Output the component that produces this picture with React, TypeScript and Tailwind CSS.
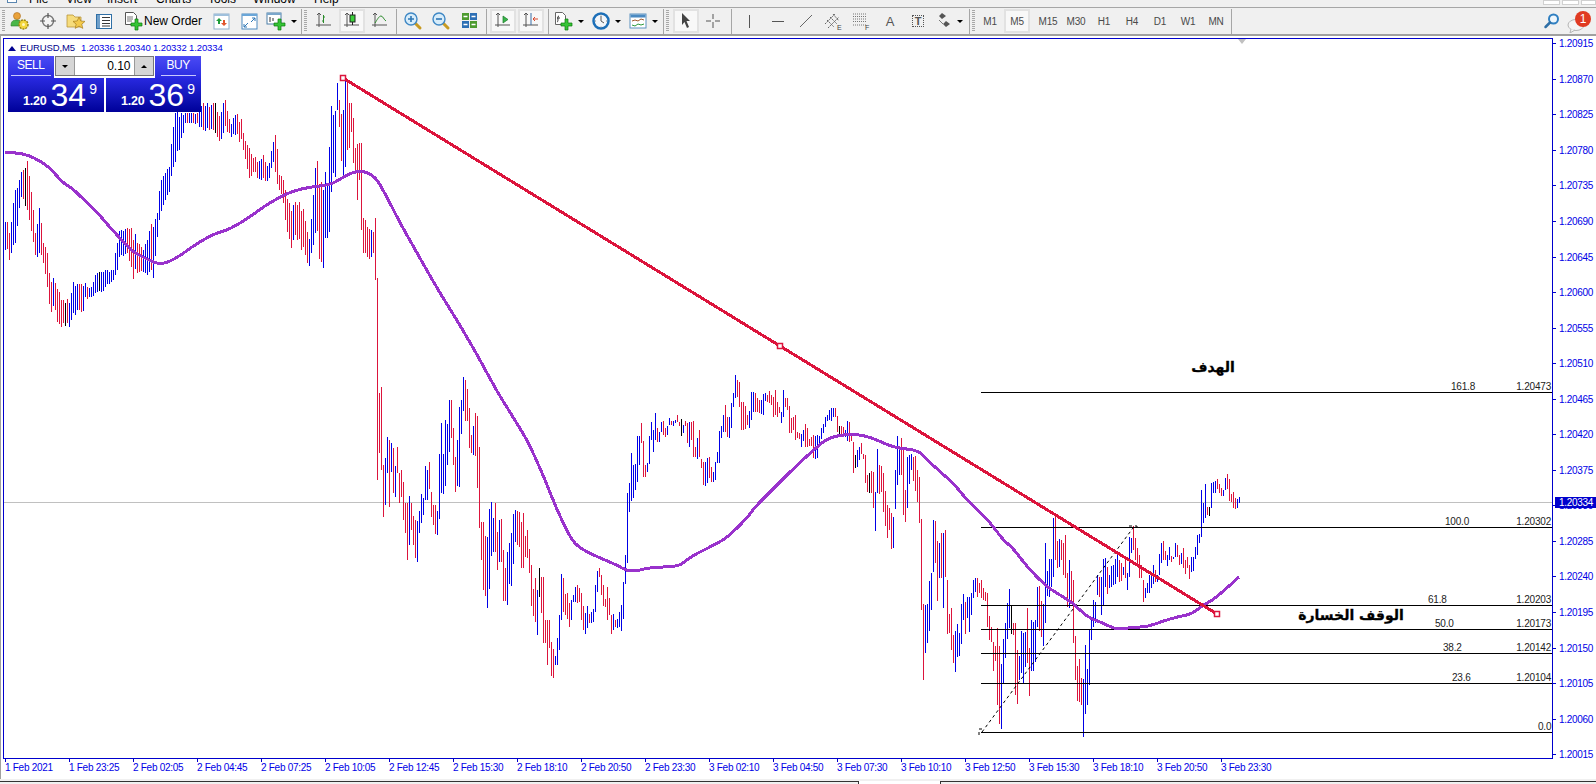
import type { ReactNode } from "react";

type Row = [number, number, number];

// first stretch of the chart, read straight in page pixels
const earlyBars: Row[] = [
  [5, 222, 250], [10, 232, 258], [15, 190, 243], [18, 183, 213], [22, 170, 193], [27, 161, 210], [32, 197, 233],
  [35, 233, 255], [39, 208, 253], [43, 243, 263], [47, 253, 287], [50, 280, 310], [55, 283, 310], [58, 290, 325],
  [63, 300, 323], [69, 303, 327], [73, 282, 313], [78, 283, 308], [82, 283, 313], [85, 283, 297], [90, 290, 298],
  [95, 275, 293], [102, 273, 293], [107, 270, 284], [113, 270, 280], [116, 243, 270], [120, 232, 257], [127, 228, 253],
  [132, 233, 275], [137, 243, 273], [143, 250, 272], [148, 232, 270], [153, 227, 278], [157, 213, 237], [160, 183, 215],
  [165, 173, 200], [169, 167, 192], [172, 132, 167], [175, 113, 162], [185, 113, 123], [197, 113, 123], [203, 103, 130],
  [210, 107, 129], [215, 103, 133], [218, 117, 140], [223, 103, 133], [226, 103, 127], [230, 127, 138], [235, 115, 135],
  [242, 122, 142], [244, 142, 157], [249, 148, 178], [253, 158, 172], [258, 160, 177], [263, 155, 178], [268, 167, 180],
  [273, 142, 162], [276, 140, 185], [279, 175, 190], [282, 180, 200], [285, 190, 220], [290, 210, 248], [295, 202, 235],
  [302, 207, 247], [307, 232, 263], [310, 237, 263], [315, 168, 233], [322, 180, 263], [327, 183, 238], [330, 113, 213],
  [333, 115, 173], [336, 95, 165], [337, 83, 110], [339, 100, 127], [342, 120, 177], [345, 80, 167], [347, 83, 150],
  [349, 103, 148], [351, 103, 132], [353, 118, 163], [355, 148, 170], [357, 144, 200], [359, 143, 180], [361, 143, 230],
  [363, 218, 253], [367, 227, 257], [370, 233, 263], [373, 232, 253], [375, 218, 280],
];

// the rest is per bar: [x, top, bottom] measured on 3x crops
const midBars: Row[] = [
  [82, -246, 360], [88, 100, 280], [94, 80, 330], [100, 315, 470], [106, 295, 435], [112, 232, 340], [118, 240, 440], [124, 250, 335],
  [130, 265, 400], [136, 318, 410], [142, 260, 340], [148, 340, 430], [154, 330, 410], [160, 365, 480], [166, 430, 520], [172, 430, 600],
  [178, 408, 555], [184, 430, 510], [190, 468, 555], [196, 480, 595], [202, 483, 605], [208, 453, 520], [214, 402, 490], [220, 415, 465],
  [226, 318, 420], [232, 330, 420], [238, 306, 387], [244, 395, 470], [250, 435, 495], [256, 435, 522], [262, 453, 525], [268, 283, 476],
  [274, 190, 400], [280, 283, 403], [286, 180, 378], [292, 192, 315], [298, 120, 277], [304, 120, 235], [310, 205, 315], [316, 290, 395],
  [322, 240, 378], [328, 140, 382], [334, 120, 222], [340, 52, 153], [346, 60, 183], [352, 87, 183], [358, 143, 265], [364, 225, 280],
  [370, 198, 285], [376, 160, 287], [382, 167, 383], [388, 262, 503], [394, 487, 600], [400, 487, 690], [406, 528, 708], [412, 530, 743],
  [418, 447, 687], [424, 425, 587], [430, 473, 577], [436, 428, 577], [442, 517, 630], [448, 480, 607], [454, 477, 605], [460, 570, 722],
  [466, 625, 724], [472, 575, 735], [478, 550, 672], [484, 520, 678], [490, 462, 612], [496, 451, 545], [502, 452, 555], [508, 455, 562],
  [514, 487, 623], [520, 460, 625], [526, 527, 590], [532, 510, 595], [538, 567, 640], [544, 615, 738], [550, 687, 768], [556, 655, 785],
  [562, 690, 825], [568, 625, 710], [574, 652, 758], [580, 652, 850], [586, 780, 850], [592, 780, 915], [598, 780, 865], [604, 845, 948],
  [610, 867, 953], [616, 888, 915], [622, 835, 915], [628, 765, 870], [634, 643, 780], [640, 655, 755], [646, 702, 765], [652, 700, 778],
  [658, 730, 800], [664, 720, 780], [670, 705, 725], [676, 682, 725], [682, 675, 730], [688, 685, 725], [694, 700, 780], [700, 738, 810],
  [706, 760, 822], [712, 738, 805], [718, 762, 790], [724, 755, 790], [730, 747, 785], [736, 675, 755], [742, 632, 695], [748, 625, 650],
  [754, 645, 705], [760, 675, 738], [766, 717, 742], [772, 682, 780], [778, 713, 765], [784, 765, 822], [790, 762, 810], [796, 780, 800],
  [802, 778, 805], [808, 755, 800], [814, 735, 812], [820, 665, 777], [826, 585, 672], [832, 398, 608], [838, 370, 455], [844, 280, 423],
  [850, 315, 415], [856, 312, 390], [862, 228, 365], [868, 228, 315], [874, 190, 248], [880, 243, 350], [886, 315, 350], [892, 310, 335],
  [898, 228, 312], [904, 185, 240], [910, 210, 275], [916, 160, 240], [922, 203, 245], [928, 215, 245], [934, 187, 215], [940, 183, 225],
  [946, 205, 230], [952, 198, 225], [958, 175, 195], [964, 183, 195], [970, 183, 197], [976, 180, 190], [982, 165, 185], [988, 185, 197],
  [994, 178, 228], [1000, 195, 218], [1006, 183, 197], [1012, 190, 250], [1018, 185, 262],
];

const lateBars: Row[] = [
  [214, 185, 240], [220, 183, 290], [226, 262, 290], [232, 235, 297], [238, 210, 290], [244, 298, 325], [250, 305, 375], [256, 305, 378],
  [262, 295, 368], [268, 290, 355], [274, 320, 365], [280, 335, 365], [286, 305, 360], [292, 275, 310], [298, 213, 310], [304, 197, 235],
  [310, 165, 215], [316, 135, 215], [322, 170, 232], [328, 170, 235], [334, 130, 205], [340, 100, 140], [346, 45, 113], [352, 60, 110],
  [358, 67, 140], [364, 125, 210], [370, 127, 210], [376, 138, 207], [382, 165, 195], [388, 152, 205], [394, 95, 180], [400, 95, 155],
  [406, 100, 155], [412, 113, 155], [418, 120, 160], [424, 120, 163], [430, 103, 165], [436, 100, 122], [442, 105, 125], [448, 93, 130],
  [454, 105, 135], [460, 110, 172], [466, 90, 165], [472, 125, 172], [478, 140, 160], [484, 155, 190], [490, 90, 170], [496, 115, 140],
  [502, 115, 150], [508, 138, 220], [514, 175, 220], [520, 172, 210], [526, 165, 240], [532, 215, 235], [538, 218, 238], [544, 222, 262],
  [550, 210, 243], [556, 192, 262], [562, 203, 262], [568, 238, 258], [574, 230, 258], [580, 225, 295], [586, 228, 296], [592, 225, 293],
  [598, 228, 260], [604, 205, 237], [610, 193, 218], [616, 170, 200], [622, 165, 182], [628, 150, 180], [634, 145, 183], [640, 145, 172],
  [646, 145, 172], [652, 168, 215], [658, 198, 222], [664, 198, 225], [670, 200, 230], [676, 210, 232], [682, 183, 243], [688, 185, 245],
  [694, 220, 243], [700, 247, 340], [706, 285, 325], [712, 270, 322], [718, 262, 300], [724, 250, 283], [730, 283, 297], [736, 285, 368],
  [742, 345, 395], [748, 338, 400], [754, 333, 398], [760, 335, 443], [766, 397, 512], [772, 267, 398], [778, 315, 402], [784, 317, 395],
  [790, 340, 455], [796, 393, 497], [802, 435, 533], [808, 445, 510], [814, 460, 568], [820, 472, 565], [826, 330, 448], [832, 228, 375],
  [838, 263, 345], [844, 235, 345], [850, 265, 465], [856, 390, 485], [862, 290, 443], [868, 285, 373], [874, 283, 330], [880, 290, 362],
  [886, 288, 392], [892, 330, 425], [898, 350, 490], [904, 477, 750], [910, 733, 960], [916, 735, 880], [922, 732, 848], [928, 663, 813],
  [934, 640, 750], [940, 480, 635], [946, 483, 610], [952, 543, 722], [958, 550, 655], [964, 518, 655], [970, 520, 743], [976, 510, 652],
  [982, 660, 823], [988, 762, 820], [994, 745, 870], [1000, 825, 908], [1006, 812, 935], [1012, 793, 890], [1018, 820, 888], [1024, 732, 853],
  [1030, 702, 780], [1036, 725, 822], [1042, 712, 775], [1048, 712, 815], [1054, 685, 765], [1060, 660, 717], [1066, 655, 715], [1072, 655, 698],
  [1078, 670, 700],
];

const endBars: Row[] = [
  [3, 400, 465], [10, 360, 415], [16, 355, 395], [22, 355, 410], [28, 368, 400], [34, 360, 415], [40, 385, 420], [46, 395, 422], [52, 400, 500],
  [58, 468, 540], [64, 502, 545], [70, 545, 632], [76, 558, 602], [82, 505, 735], [88, 558, 792], [94, 612, 806], [100, 537, 670], [106, 490, 595],
  [112, 430, 538], [118, 388, 505], [124, 437, 522], [130, 490, 525], [136, 488, 705], [142, 570, 732], [148, 587, 660], [154, 513, 640], [160, 518, 668],
  [166, 515, 622], [172, 445, 608], [178, 565, 708], [184, 480, 632], [190, 485, 632], [196, 480, 605], [202, 380, 500], [208, 378, 512], [214, 422, 530],
  [220, 432, 558], [226, 248, 490], [232, 332, 408], [238, 297, 410], [244, 297, 380], [250, 175, 352], [256, 160, 300], [262, 242, 325], [268, 238, 322],
  [274, 240, 300], [280, 248, 345], [286, 225, 355], [292, 340, 440], [298, 300, 445], [304, 332, 425], [310, 360, 550], [316, 527, 660], [322, 617, 723],
  [328, 597, 727], [334, 655, 735], [340, 657, 830], [346, 555, 762], [352, 627, 735], [358, 507, 675], [364, 475, 540], [370, 420, 500], [376, 425, 490],
  [382, 345, 405], [388, 350, 410], [394, 350, 465], [400, 297, 435], [406, 295, 380], [412, 320, 403], [418, 345, 385], [424, 318, 380], [430, 315, 375],
  [436, 298, 372], [442, 280, 352], [448, 300, 365], [454, 310, 362], [460, 320, 345], [466, 300, 355], [472, 340, 390], [478, 232, 350], [484, 235, 278],
  [490, 197, 270], [496, 235, 300], [502, 265, 320], [508, 285, 355], [514, 315, 355], [520, 360, 425], [526, 385, 415], [532, 370, 400], [538, 345, 400],
  [544, 345, 385], [550, 315, 372], [556, 330, 365], [562, 345, 365], [568, 282, 345], [574, 248, 310], [580, 242, 300], [586, 272, 300], [592, 285, 318],
  [598, 260, 300], [604, 288, 305], [610, 290, 298], [616, 250, 290], [622, 255, 290], [628, 285, 315], [634, 280, 312], [640, 265, 325], [646, 300, 342],
  [652, 290, 325], [658, 315, 358], [664, 290, 335], [670, 290, 332], [676, 260, 298], [682, 225, 285], [688, 222, 248], [694, 90, 232], [700, 130, 188],
  [706, 72, 175], [712, 140, 165], [718, 140, 168], [724, 70, 145], [730, 65, 98], [736, 62, 100], [742, 58, 88], [748, 72, 100], [754, 83, 108],
  [760, 90, 108], [766, 55, 90], [772, 42, 88], [778, 58, 122], [784, 102, 125], [790, 97, 145], [796, 115, 148], [802, 118, 145], [808, 110, 130],
];

const fromCrop = (ox: number, oy: number, rows: Row[]): Row[] =>
  rows.map(([x, a, b]) => [Math.round(ox + x / 3), oy + a / 3, oy + b / 3]);

const allRows: Row[] = [
  ...earlyBars,
  ...fromCrop(350, 360, midBars),
  ...fromCrop(620, 360, lateBars),
  ...fromCrop(970, 460, endBars),
];

const blackBars = [25, 65, 99, 215, 539, 681, 839, 855, 869, 1011, 1209];

function buildBars() {
  const known = new Map<number, Row>();
  allRows.forEach((r) => known.set(r[0], r));
  const keys = [...known.keys()].sort((a, b) => a - b);
  let seed = 7;
  const rnd = () => {
    seed = (seed * 16807) % 2147483647;
    return seed / 2147483647;
  };
  const bars: { x: number; top: number; bottom: number }[] = [];
  for (let x = 5; x <= 1239; x += 2) {
    const hit = known.get(x);
    if (hit) {
      bars.push({ x, top: hit[1], bottom: hit[2] });
      continue;
    }
    const after = keys.findIndex((k) => k > x);
    const a = known.get(keys[Math.max(after - 1, 0)])!;
    const b = known.get(keys[Math.max(after, 0)])!;
    const t = (x - a[0]) / (b[0] - a[0]);
    const top = a[1] + (b[1] - a[1]) * t;
    const bottom = a[2] + (b[2] - a[2]) * t;
    const wobble = (rnd() - 0.5) * (bottom - top) * 0.3;
    bars.push({ x, top: top + wobble, bottom: bottom + wobble });
  }
  return bars;
}

const bars = buildBars();
const mid = (i: number) => {
  const b = bars[Math.min(Math.max(i, 0), bars.length - 1)];
  return (b.top + b.bottom) / 2;
};

let bluePath = "";
let redPath = "";
let blackPath = "";
bars.forEach((b, i) => {
  const seg = `M${b.x + 0.5} ${Math.round(b.top)}V${Math.round(b.bottom)}`;
  if (blackBars.includes(b.x)) blackPath += seg;
  else if (mid(i + 1) < mid(i - 1)) bluePath += seg;
  else redPath += seg;
});

const maPoints = [
  [5, 152], [17, 153], [28, 155], [40, 161], [50, 168], [63, 183], [72, 188], [80, 196], [97, 212], [107, 224], [117, 235], [133, 252],
  [143, 257], [155, 263], [163, 264], [177, 258], [193, 246], [210, 236], [220, 232], [230, 229], [250, 217], [263, 207], [280, 197],
  [293, 191], [310, 187], [330, 185], [340, 179], [353, 172], [363, 171], [375, 176], [387, 197], [400, 223], [420, 258], [438, 290],
  [460, 325], [480, 360], [487, 373], [498, 393], [513, 417], [527, 440], [535, 457], [543, 475], [553, 500], [563, 523], [573, 542],
  [583, 550], [600, 558], [617, 565], [627, 571], [637, 571], [647, 568], [663, 567], [680, 566], [690, 557], [710, 547], [727, 538],
  [748, 517], [755, 507], [767, 495], [795, 467], [817, 447], [828, 438], [847, 434], [863, 435], [877, 440], [895, 448], [918, 450],
  [927, 460], [953, 483], [963, 495], [970, 503], [990, 522], [1003, 540], [1013, 548], [1027, 567], [1047, 587], [1060, 595], [1073, 603],
  [1087, 617], [1103, 623], [1117, 630], [1133, 627], [1147, 627], [1163, 621], [1177, 617], [1192, 614], [1203, 605], [1213, 600],
  [1228, 587], [1239, 577],
];

// round the corners off through the midpoints
const maPath = maPoints.reduce((d, p, i) => {
  if (i === 0) return `M${p[0]} ${p[1]}`;
  if (i === maPoints.length - 1) return `${d}L${p[0]} ${p[1]}`;
  const n = maPoints[i + 1];
  return `${d}Q${p[0]} ${p[1]} ${(p[0] + n[0]) / 2} ${(p[1] + n[1]) / 2}`;
}, "");

const fibLevels = [
  { y: 392, name: "161.8", nameX: 1451, price: "1.20473", textY: 390 },
  { y: 527, name: "100.0", nameX: 1445, price: "1.20302", textY: 525 },
  { y: 605, name: "61.8", nameX: 1428, price: "1.20203", textY: 603 },
  { y: 629, name: "50.0", nameX: 1435, price: "1.20173", textY: 627 },
  { y: 653, name: "38.2", nameX: 1443, price: "1.20142", textY: 651 },
  { y: 683, name: "23.6", nameX: 1452, price: "1.20104", textY: 681 },
  { y: 732, name: "0.0", nameX: 1538, price: "", textY: 730 },
];

const priceLabels = Array.from({ length: 21 }, (_, i) => (1.20915 - i * 0.00045).toFixed(5));

const timeLabels = [
  "1 Feb 2021", "1 Feb 23:25", "2 Feb 02:05", "2 Feb 04:45", "2 Feb 07:25", "2 Feb 10:05", "2 Feb 12:45",
  "2 Feb 15:30", "2 Feb 18:10", "2 Feb 20:50", "2 Feb 23:30", "3 Feb 02:10", "3 Feb 04:50", "3 Feb 07:30",
  "3 Feb 10:10", "3 Feb 12:50", "3 Feb 15:30", "3 Feb 18:10", "3 Feb 20:50", "3 Feb 23:30",
];

function Grip({ className = "" }: { className?: string }) {
  return (
    <div
      className={`w-[3px] h-[22px] shrink-0 bg-[repeating-linear-gradient(to_bottom,#a8a8a8_0,#a8a8a8_1px,transparent_1px,transparent_2px)] ${className}`}
    />
  );
}

function Sep({ className = "" }: { className?: string }) {
  return <div className={`w-px h-[25px] shrink-0 bg-[#a6a6a6] ${className}`} />;
}

function Btn({ className = "w-[28px]", active, children }: { className?: string; active?: boolean; children: ReactNode }) {
  return (
    <div
      className={`h-[24px] shrink-0 flex items-center justify-center ${className} ${
        active ? "bg-[#f8f8f8] border-2 border-[#e2e2e2]" : ""
      }`}
    >
      {children}
    </div>
  );
}

function Drop() {
  return <div className="ml-[5px] w-0 h-0 border-x-[3px] border-x-transparent border-t-[3px] border-t-black" />;
}

function Plus({ x, y }: { x: number; y: number }) {
  return (
    <path
      transform={`translate(${x} ${y})`}
      d="M4 0h3v4h4v3H7v4H4V7H0V4h4z"
      fill="#35c435"
      stroke="#0c7a0c"
      strokeWidth="0.7"
    />
  );
}

function Ico({ w = 20, children }: { w?: number; children: ReactNode }) {
  return (
    <svg width={w} height="20" viewBox={`0 0 ${w} 20`} className="block shrink-0">
      {children}
    </svg>
  );
}

function Tf({ label, className = "w-[28px]", active }: { label: string; className?: string; active?: boolean }) {
  return (
    <Btn className={className} active={active}>
      <span className="text-[10px] tracking-[-0.2px] text-[#4a4a4a]">{label}</span>
    </Btn>
  );
}

function ChartAxes() {
  return <path d="M4 2v14M1 14h15M4 2l-2 2M4 2l2 2" fill="none" stroke="#555" strokeWidth="1" />;
}

function Toolbar() {
  return (
    <div className="h-[26px] bg-[#f0f0f0] flex items-center">
      <Grip className="ml-[2px]" />
      <Btn className="w-[28px] ml-px">
        <Ico w={20}>
          <circle cx="7" cy="5" r="3.5" fill="#e9a23b" stroke="#a76a1a" strokeWidth="0.6" />
          <path d="M1 15c0-5 2-6 6-6 3 0 5 1 5 6z" fill="#49b649" stroke="#2b7a2b" strokeWidth="0.6" />
          <circle cx="13.5" cy="13.5" r="4.5" fill="#f3d63c" stroke="#9a8412" strokeWidth="1.4" strokeDasharray="2 1" />
          <circle cx="13.5" cy="13.5" r="1.5" fill="#fff7c0" />
        </Ico>
      </Btn>
      <Btn>
        <Ico w={18}>
          <circle cx="9" cy="10" r="5.5" fill="#f4f4f4" stroke="#777" strokeWidth="1.4" />
          <path d="M9 2v5M9 13v5M1 10h5M12 10h5" stroke="#555" strokeWidth="1.2" />
        </Ico>
      </Btn>
      <Btn>
        <Ico w={20}>
          <path d="M1 4h6l2 2h6v10H1z" fill="#f6dc7c" stroke="#b9953a" strokeWidth="0.8" />
          <path d="M13 6l1.8 4 4.2.4-3.2 2.8 1 4.2-3.8-2.3-3.8 2.3 1-4.2L7 10.4l4.2-.4z" fill="#f3ca4c" stroke="#a67d1c" strokeWidth="0.7" />
        </Ico>
      </Btn>
      <Btn>
        <Ico w={18}>
          <rect x="1.5" y="3.5" width="15" height="14" fill="#fff" stroke="#2f6fa6" />
          <rect x="2" y="4" width="3" height="13" fill="#6f9fc9" />
          <path d="M7 6.5h8M7 9.5h8M7 12.5h8M7 15h8" stroke="#3a3a3a" strokeWidth="1" />
        </Ico>
      </Btn>
      <div className="w-[89px] h-[24px] shrink-0 flex items-center pl-[6px]">
        <Ico w={20}>
          <path d="M1.5 1.5h8l3 3v9h-11z" fill="#fff" stroke="#555" />
          <path d="M3 6h6M3 8h6M3 10h5" stroke="#777" strokeWidth="1" />
          <Plus x={7} y={8} />
        </Ico>
        <span className="text-[12px] leading-none text-black">New Order</span>
      </div>
      <Btn>
        <Ico w={17}>
          <rect x="1" y="3" width="15" height="15" fill="#fff" stroke="#8fb0cc" />
          <path d="M1 3h15v2H1z" fill="#9fc0dc" />
          <path d="M6 7l3 3H7v3H5v-3H3z" fill="#1f9c3a" />
          <path d="M11 15l-3-3h2V9h2v3h2z" fill="#e0562c" />
        </Ico>
      </Btn>
      <Btn>
        <Ico w={17}>
          <rect x="1" y="3" width="15" height="15" fill="#fff" stroke="#4c8ac0" />
          <path d="M1 3h15v2H1z" fill="#6aa6d8" />
          <path d="M3 16l4-4M3 16v-3M3 16h3M14 7l-4 4M14 7v3M14 7h-3" stroke="#2f77b5" strokeWidth="1" fill="none" />
        </Ico>
      </Btn>
      <Btn className="w-[37px]">
        <Ico w={20}>
          <rect x="1" y="2" width="14" height="11" fill="#fff" stroke="#4c7fa8" />
          <path d="M1 2h14v2H1z" fill="#7ba7cb" />
          <path d="M4 6v5M7 7v3" stroke="#333" />
          <Plus x={8} y={8} />
        </Ico>
        <Drop />
      </Btn>
      <Sep className="ml-px" />
      <Grip className="ml-[2px]" />
      <Btn className="w-[28px] ml-[3px]">
        <Ico w={18}>
          <ChartAxes />
          <path d="M8.5 4v8M7 10h1.5M8.5 6H10" stroke="#2a8a2a" fill="none" />
        </Ico>
      </Btn>
      <Btn className="w-[26px] ml-px" active>
        <Ico w={18}>
          <ChartAxes />
          <path d="M9.5 1v13" stroke="#222" />
          <rect x="7" y="4" width="5" height="7" fill="#3bd03b" stroke="#222" />
        </Ico>
      </Btn>
      <Btn className="w-[28px] ml-px">
        <Ico w={18}>
          <ChartAxes />
          <path d="M4 12c2-3 4-7 6-7s3 4 5 5" fill="none" stroke="#2a8a2a" strokeWidth="1" />
        </Ico>
      </Btn>
      <Sep className="ml-[2px]" />
      <Btn className="w-[28px] ml-[2px]">
        <Ico w={20}>
          <path d="M12 12l5 5" stroke="#c79a22" strokeWidth="3" strokeLinecap="round" />
          <circle cx="8" cy="8" r="6" fill="#d7ecfa" stroke="#3f88c5" strokeWidth="1.4" />
          <path d="M5 8h6M8 5v6" stroke="#2f77b5" strokeWidth="1.6" />
        </Ico>
      </Btn>
      <Btn>
        <Ico w={20}>
          <path d="M12 12l5 5" stroke="#c79a22" strokeWidth="3" strokeLinecap="round" />
          <circle cx="8" cy="8" r="6" fill="#d7ecfa" stroke="#3f88c5" strokeWidth="1.4" />
          <path d="M5 8h6" stroke="#2f77b5" strokeWidth="1.6" />
        </Ico>
      </Btn>
      <Btn>
        <Ico w={17}>
          <rect x="1" y="2" width="7" height="7" fill="#4d9b2f" />
          <rect x="9" y="2" width="7" height="7" fill="#2d6fb5" />
          <rect x="1" y="10" width="7" height="7" fill="#2d6fb5" />
          <rect x="9" y="10" width="7" height="7" fill="#4d9b2f" />
          <path d="M2.5 5.5h4M10.5 5.5h4M2.5 13.5h4M10.5 13.5h4" stroke="#fff" strokeWidth="1.6" />
        </Ico>
      </Btn>
      <Sep className="ml-[3px]" />
      <Btn className="w-[26px] ml-[3px]" active>
        <Ico w={18}>
          <ChartAxes />
          <path d="M9 5v7l5-3.500z" fill="#39b54a" stroke="#1c7a2b" strokeWidth="0.7" />
        </Ico>
      </Btn>
      <Btn className="w-[26px] ml-[2px]" active>
        <Ico w={18}>
          <ChartAxes />
          <path d="M9 2v12" stroke="#3a6ea5" />
          <path d="M16 8h-5M11 8l2-2M11 8l2 2" stroke="#d8482c" fill="none" />
        </Ico>
      </Btn>
      <Sep className="ml-[4px]" />
      <Btn className="w-[35px] ml-[2px]">
        <Ico w={19}>
          <path d="M1.500 1.500h7l3 3v9h-10z" fill="#fff" stroke="#666" />
          <path d="M5 5c-2 0-1 3-1 4s-1 2 0 2M3 7h3" fill="none" stroke="#333" />
          <Plus x={7} y={8} />
        </Ico>
        <Drop />
      </Btn>
      <Btn className="w-[36px] ml-[2px]">
        <Ico w={18}>
          <circle cx="9" cy="10" r="7.500" fill="#f3f6fa" stroke="#1c6fb8" strokeWidth="2.500" />
          <path d="M9 5v5l3 2" stroke="#555" fill="none" />
          <path d="M9 3.500v1M9 15.500v1M3 10h1M14 10h1" stroke="#888" />
        </Ico>
        <Drop />
      </Btn>
      <Btn className="w-[36px] ml-px">
        <Ico w={18}>
          <rect x="1" y="3" width="16" height="14" fill="#fff" stroke="#5c92c0" />
          <rect x="1.500" y="3.500" width="15" height="3" fill="#4b8ac2" />
          <path d="M3 10l3-1 3 1 3-2 3 1" fill="none" stroke="#a05a2c" />
          <path d="M3 14l3 1 3-2 3 1 3-1" fill="none" stroke="#2c9a3c" />
        </Ico>
        <Drop />
      </Btn>
      <Sep className="ml-[2px]" />
      <Grip className="ml-[2px]" />
      <Btn className="w-[26px] ml-[4px]" active>
        <svg width="12" height="18" viewBox="0 0 12 18" className="block">
          <path d="M2 1l8 8H6.500l2.500 6-2 1-2.500-6L2 13z" fill="#444" />
        </svg>
      </Btn>
      <Btn>
        <Ico w={16}>
          <path d="M8 3v5M8 11v6M1 10h5M10 10h5" stroke="#555" />
        </Ico>
      </Btn>
      <Sep className="ml-[4px]" />
      <Btn className="w-[28px] ml-[3px]">
        <div className="w-px h-[13px] bg-[#555]" />
      </Btn>
      <Btn className="w-[28px] ml-px">
        <div className="w-[12px] h-px bg-[#555]" />
      </Btn>
      <Btn>
        <Ico w={14}>
          <path d="M1 16L13 4" stroke="#666" />
        </Ico>
      </Btn>
      <Btn>
        <Ico w={20}>
          <path d="M1 13L11 3M4 17L15 6M3 9l7 7M6 6l7 7M9 3l6 7" stroke="#666" fill="none" strokeDasharray="2 1" />
          <text x="13" y="19" className="text-[7px] font-['Liberation_Sans']" fill="#444">E</text>
        </Ico>
      </Btn>
      <Btn>
        <Ico w={20}>
          <path d="M1 3h13M1 5.500h13M1 8h13M1 10.500h13M1 14h13" stroke="#777" strokeDasharray="1 1" />
          <text x="13" y="19" className="text-[7px] font-['Liberation_Sans']" fill="#444">F</text>
        </Ico>
      </Btn>
      <Btn>
        <span className="text-[13px] leading-none text-[#555]">A</span>
      </Btn>
      <Btn>
        <div className="w-[12px] h-[12px] flex items-center justify-center border border-dotted border-[#555]">
          <span className="text-[11px] leading-none font-bold text-[#555]">T</span>
        </div>
      </Btn>
      <Btn className="w-[35px]">
        <Ico w={16}>
          <path d="M6 2l4 3-4 3-3-3zM10 10l4 3-4 3-3-3z" fill="#555" />
          <path d="M3 9l4 4" stroke="#777" />
        </Ico>
        <Drop />
      </Btn>
      <Sep className="ml-[2px]" />
      <Grip className="ml-[2px]" />
      <Tf label="M1" className="w-[26px] ml-[2px]" />
      <Tf label="M5" className="w-[26px] ml-px" active />
      <Tf label="M15" className="w-[28px] ml-[4px]" />
      <Tf label="M30" />
      <Tf label="H1" />
      <Tf label="H4" />
      <Tf label="D1" />
      <Tf label="W1" />
      <Tf label="MN" />
      <Sep className="ml-px" />
      <div className="ml-auto flex items-center pr-[5px]">
        <svg width="18" height="18" viewBox="0 0 18 18" className="block">
          <circle cx="10.500" cy="7" r="4.500" fill="#eef6fc" stroke="#2f7fc1" strokeWidth="2" />
          <path d="M7 10.500L2.500 15" stroke="#2f6fa6" strokeWidth="2.500" strokeLinecap="round" />
        </svg>
        <div className="relative w-[24px] h-[24px] ml-[6px]">
          <svg width="18" height="14" viewBox="0 0 18 14" className="absolute left-0 bottom-0 block">
            <ellipse cx="9" cy="6" rx="8" ry="5.500" fill="#f4f4f4" stroke="#b5b5b5" />
            <path d="M4 10l-1 4 5-3" fill="#f4f4f4" stroke="#b5b5b5" />
          </svg>
          <div className="absolute right-0 top-[2px] w-[16px] h-[16px] rounded-full bg-[#e03a22] flex items-center justify-center text-[12px] leading-none text-white">
            1
          </div>
        </div>
      </div>
    </div>
  );
}

function QuoteBox({ big, className }: { big: string; className: string }) {
  return (
    <div className={`h-[34px] bg-gradient-to-b from-[#2828e0] to-[#000099] flex items-end text-white ${className}`}>
      <span className="text-[12.500px] font-bold leading-[13px] mb-[4px] tracking-[-0.2px]">1.20</span>
      <span className="ml-[4px] text-[32px] leading-[30px] mb-[2px]">{big}</span>
      <span className="ml-[3px] text-[14px] leading-none self-start mt-[4px]">9</span>
    </div>
  );
}

function TradePanel() {
  const side =
    "w-[46px] h-[22px] pb-[2px] bg-gradient-to-b from-[#4a4af5] to-[#2a2ae0] flex items-center justify-center text-[12px] tracking-[-0.4px] text-white";
  return (
    <div className="absolute left-[4px] top-[17px] w-[193px] h-[56px]">
      <div className="flex h-[22px] bg-white">
        <div className={side}>
          <span className="border-b border-[#c8c8ff] px-[6px] leading-[19px]">SELL</span>
        </div>
        <div className="w-[101px] h-[20px] flex items-stretch ml-px border border-[#777] bg-white">
          <div className="w-[19px] bg-[#d6d6d6] flex items-center justify-center border-r border-[#999]">
            <div className="w-0 h-0 border-x-[3px] border-x-transparent border-t-[3px] border-t-black" />
          </div>
          <div className="flex-1 text-right pr-[4px] text-[12px] leading-[18px] text-black">0.10</div>
          <div className="w-[19px] bg-[#d6d6d6] flex items-center justify-center border-l border-[#999]">
            <div className="w-0 h-0 border-x-[3px] border-x-transparent border-b-[3px] border-b-black" />
          </div>
        </div>
        <div className={`${side} ml-px`}>
          <span className="border-b border-[#c8c8ff] px-[6px] leading-[19px]">BUY</span>
        </div>
      </div>
      <div className="flex gap-[2px]">
        <QuoteBox big="34" className="w-[96px] pl-[15px]" />
        <QuoteBox big="36" className="w-[95px] pl-[15px]" />
      </div>
    </div>
  );
}

function ChartCanvas() {
  return (
    <svg width="1548" height="719" viewBox="4 39 1548 719" className="block font-['Liberation_Sans']">
      <path d="M4 502.500H1552" stroke="#c0c0c0" strokeWidth="1" shapeRendering="crispEdges" />
      <path d="M1238 39h8l-4 5z" fill="#c0c0c0" />
      <path d={bluePath} stroke="#0000e6" strokeWidth="1" fill="none" shapeRendering="crispEdges" />
      <path d={redPath} stroke="#dc143c" strokeWidth="1" fill="none" shapeRendering="crispEdges" />
      <path d={blackPath} stroke="#000" strokeWidth="1" fill="none" shapeRendering="crispEdges" />
      {fibLevels.map((f) => (
        <path key={f.y} d={`M981 ${f.y + 0.5}H1552`} stroke="#000" strokeWidth="1" shapeRendering="crispEdges" />
      ))}
      <path d="M982 732L1133 528M1129 526h8v3M982 729h-3v6" fill="none" stroke="#000" strokeWidth="1" strokeDasharray="3 3" />
      <path d={maPath} fill="none" stroke="#9932cc" strokeWidth="3" shapeRendering="crispEdges" />
      <path d="M343 78L1217 614" stroke="#dc143c" strokeWidth="3" shapeRendering="crispEdges" />
      {[[343, 78], [780, 346], [1217, 614]].map(([x, y]) => (
        <rect key={x} x={x - 2.5} y={y - 2.5} width="5" height="5" fill="#fff" stroke="#dc143c" strokeWidth="1.500" />
      ))}
      {fibLevels.map((f) => (
        <g key={f.name} className="text-[10px] tracking-[-0.2px]" fill="#222">
          <text x={f.nameX} y={f.textY}>{f.name}</text>
          <text x="1551" y={f.textY} textAnchor="end">{f.price}</text>
        </g>
      ))}
      <g className="font-['DejaVu_Sans'] text-[14px] font-bold" fill="#000" stroke="#000" strokeWidth="0.3" textAnchor="middle">
        <text x="1213" y="372" direction="rtl">الهدف</text>
        <text x="1351" y="620" direction="rtl">الوقف الخسارة</text>
      </g>
    </svg>
  );
}

export default function App() {
  return (
    <div className="relative w-[1596px] h-[784px] overflow-hidden bg-white font-['Liberation_Sans',Arial,sans-serif]">
      {/* menu bar, only its bottom edge is in the picture */}
      <div className="h-[7px] bg-[#f0f0f0] overflow-hidden flex">
        <div className="w-[10px] h-[3px] ml-[7px] shrink-0 bg-[#fff] border-x border-b border-[#5a86b0]" />
        <div className="flex pl-[12px] -mt-[8px] text-[12px] leading-[14px] text-black">
          <span className="w-[37px]">File</span>
          <span className="w-[41px]">View</span>
          <span className="w-[49px]">Insert</span>
          <span className="w-[52px]">Charts</span>
          <span className="w-[45px]">Tools</span>
          <span className="w-[61px]">Window</span>
          <span>Help</span>
        </div>
        <div className="ml-auto flex gap-[2px] h-[5px]">
          <div className="w-[17px] bg-white border border-[#d0d0d0]" />
          <div className="w-[17px] bg-white border border-[#d0d0d0]" />
          <div className="w-[15px] bg-white border border-[#d0d0d0]" />
        </div>
      </div>
      <div className="h-px bg-[#a6a6a6]" />
      <Toolbar />
      <div className="h-[2px] bg-[#a0a0a0]" />

      <div className="flex pt-[2px] border-l border-[#a0a0a0]">
        <div className="w-[1552px] pl-[2px]">
          <div className="relative w-[1550px] h-[721px] border border-[#0000cd]">
            <ChartCanvas />
            <div className="absolute left-[4px] top-[3px] flex items-center h-[12px] text-[9.500px] tracking-[-0.1px] text-[#0000e6]">
              <div className="w-0 h-0 border-x-[4px] border-x-transparent border-b-[5px] border-b-[#000090]" />
              <span className="ml-[4px] w-[61px] text-[#00008b]">EURUSD,M5</span>
              <span className="w-[36px]">1.20336</span>
              <span className="w-[36px]">1.20340</span>
              <span className="w-[36px]">1.20332</span>
              <span>1.20334</span>
            </div>
            <TradePanel />
          </div>
          <div className="flex pl-[2px] h-[20px]">
            {timeLabels.map((t) => (
              <div key={t} className="w-[64px] shrink-0">
                <div className="w-px h-[3px] bg-[#0000cd]" />
                <div className="text-[10px] leading-[11px] tracking-[-0.28px] whitespace-nowrap text-[#0000e6]">{t}</div>
              </div>
            ))}
          </div>
        </div>

        <div className="relative flex-1 h-[721px]">
          <div className="-mt-[12px]">
            {priceLabels.map((p) => (
              <div key={p} className="h-[35.550px] flex items-center">
                <div className="w-[3px] h-px bg-[#0000cd]" />
                <span className="ml-[3px] text-[10px] tracking-[-0.3px] text-[#0000e6]">{p}</span>
              </div>
            ))}
          </div>
          <div className="absolute left-[2px] right-0 top-[459px] h-[11px] bg-[#0000cd] text-white text-[10px] leading-[11px] tracking-[-0.3px] pl-[4px]">
            1.20334
          </div>
        </div>
      </div>

      {/* tab strip */}
      <div className="h-[5px] bg-[#f0f0f0]">
        <div className="h-[2px]" />
        <div className="flex h-[3px]">
          <div className="w-[858px] border-t border-[#333]" />
          <div className="w-[83px] bg-white border-x border-[#333]" />
          <div className="flex-1 border-t border-[#333]" />
        </div>
      </div>
    </div>
  );
}
